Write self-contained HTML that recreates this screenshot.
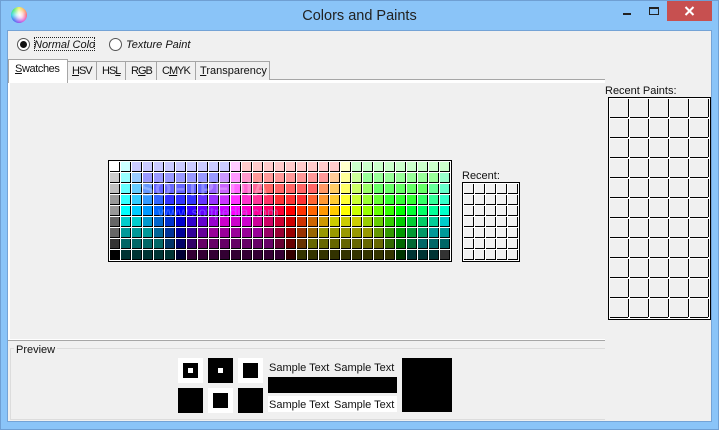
<!DOCTYPE html>
<html><head><meta charset="utf-8"><title>Colors and Paints</title>
<style>
html,body{margin:0;padding:0}
body{width:719px;height:430px;overflow:hidden;position:relative;background:#8ac4f8;font:11px "Liberation Sans",sans-serif;color:#111}
div,span{position:absolute;box-sizing:border-box}
u{text-decoration:underline}
.t{white-space:nowrap;line-height:14px}
.frame{left:0;top:0;width:719px;height:430px;border:1px solid #6f9fd3}
.client{left:7px;top:30px;width:705px;height:392px;background:#f0f0f0;border:1px solid #74a3d6}
.tab{top:61px;height:19px;background:#f0f0f0;border:1px solid #a6a6a6;border-bottom:0}
.g{border:1px solid #000;background:#fff;display:grid;padding:1px;gap:1px}
.g i{display:block;box-sizing:border-box;border-right:1px solid #000;border-bottom:1px solid #000;background:#f0f0f0}
#sw{left:108px;top:160px;width:344px;height:102px;grid-template-columns:repeat(31,10px);grid-auto-rows:10px}
#re{left:462px;top:182px;width:58px;height:80px;grid-template-columns:repeat(5,10px);grid-auto-rows:10px}
#rp{left:608px;top:97px;width:103px;height:223px;grid-template-columns:repeat(5,19px);grid-auto-rows:19px}
#rp i{position:relative}
#rp i::after{content:"";position:absolute;right:-1px;bottom:-1px;width:1px;height:1px;background:#f0f0f0}
.k{background:#000}.w{background:#fff}
</style></head><body>
<div class="frame"></div>
<div class="client"></div>

<div style="left:11px;top:7px;width:16px;height:16px;border-radius:50%;background:radial-gradient(circle at 55% 50%,rgba(255,255,255,1) 0,rgba(255,255,255,.8) 25%,rgba(255,255,255,.1) 70%,rgba(255,255,255,0) 80%),conic-gradient(#e8f040,#ff9030,#f83050,#e030c0,#8030e8,#3060f0,#20d0e0,#40e860,#e8f040)"></div>
<div class="t" style="left:0;top:7px;width:719px;text-align:center;font-size:14.5px;line-height:18px;color:#222">Colors and Paints</div>

<div style="left:623px;top:13px;width:8px;height:2px;background:#222"></div>
<div style="left:649px;top:7px;width:10px;height:8px;border:1px solid #222;border-top:2px solid #222"></div>
<div style="left:667px;top:1px;width:45px;height:20px;background:#c75050"></div>
<svg style="position:absolute;left:684px;top:6px" width="11" height="10" viewBox="0 0 11 10"><path d="M1.5 1L9.5 9M9.5 1L1.5 9" stroke="#fff" stroke-width="2"/></svg>

<div style="left:17px;top:38px;width:13px;height:13px;border-radius:50%;border:1px solid #555;background:#fff"></div>
<div style="left:20px;top:41px;width:7px;height:7px;border-radius:50%;background:#111"></div>
<div style="left:34px;top:37px;width:61px;height:14px;border:1px dotted #222"></div>
<div class="t" style="left:34px;top:38px;width:61px;overflow:hidden;font-style:italic">Normal Color</div>
<div style="left:109px;top:38px;width:13px;height:13px;border-radius:50%;border:1px solid #555;background:#fff"></div>
<div class="t" style="left:126px;top:38px;font-style:italic">Texture Paint</div>

<div style="left:8px;top:79px;width:597px;height:262px;background:#fff;border-top:1px solid #a6a6a6;border-bottom:1px solid #a6a6a6"></div>
<div style="left:10px;top:83px;width:595px;height:256px;background:#f0f0f0"></div>

<div class="tab" style="left:67px;width:30px"></div>
<div class="tab" style="left:96px;width:30px"></div>
<div class="tab" style="left:125px;width:32px"></div>
<div class="tab" style="left:156px;width:40px"></div>
<div class="tab" style="left:195px;width:75px"></div>
<div style="left:8px;top:59px;width:60px;height:24px;background:#fff;border:1px solid #a6a6a6;border-bottom:0"></div>
<div style="left:10px;top:83px;width:56px;height:1px;background:#f0f0f0"></div>
<div class="t" style="left:15px;top:62px;letter-spacing:-.4px"><u>S</u>watches</div>
<div class="t" style="left:72px;top:64px;letter-spacing:-1px"><u>H</u>SV</div>
<div class="t" style="left:102px;top:64px;letter-spacing:-1px">HS<u>L</u></div>
<div class="t" style="left:131px;top:64px;letter-spacing:-1px">R<u>G</u>B</div>
<div class="t" style="left:162px;top:64px;letter-spacing:-1px">C<u>M</u>YK</div>
<div class="t" style="left:200px;top:64px"><u>T</u>ransparency</div>

<div class="g" id="sw">
<i style="background:#fff"></i><i style="background:#cff"></i><i style="background:#ccf"></i><i style="background:#ccf"></i><i style="background:#ccf"></i><i style="background:#ccf"></i><i style="background:#ccf"></i><i style="background:#ccf"></i><i style="background:#ccf"></i><i style="background:#ccf"></i><i style="background:#ccf"></i><i style="background:#fcf"></i><i style="background:#fcc"></i><i style="background:#fcc"></i><i style="background:#fcc"></i><i style="background:#fcc"></i><i style="background:#fcc"></i><i style="background:#fcc"></i><i style="background:#fcc"></i><i style="background:#fcc"></i><i style="background:#fcc"></i><i style="background:#ffc"></i><i style="background:#cfc"></i><i style="background:#cfc"></i><i style="background:#cfc"></i><i style="background:#cfc"></i><i style="background:#cfc"></i><i style="background:#cfc"></i><i style="background:#cfc"></i><i style="background:#cfc"></i><i style="background:#cfc"></i>
<i style="background:#ccc"></i><i style="background:#9ff"></i><i style="background:#9cf"></i><i style="background:#99f"></i><i style="background:#99f"></i><i style="background:#99f"></i><i style="background:#99f"></i><i style="background:#99f"></i><i style="background:#99f"></i><i style="background:#99f"></i><i style="background:#c9f"></i><i style="background:#f9f"></i><i style="background:#f9c"></i><i style="background:#f99"></i><i style="background:#f99"></i><i style="background:#f99"></i><i style="background:#f99"></i><i style="background:#f99"></i><i style="background:#f99"></i><i style="background:#f99"></i><i style="background:#fc9"></i><i style="background:#ff9"></i><i style="background:#cf9"></i><i style="background:#9f9"></i><i style="background:#9f9"></i><i style="background:#9f9"></i><i style="background:#9f9"></i><i style="background:#9f9"></i><i style="background:#9f9"></i><i style="background:#9f9"></i><i style="background:#9fc"></i>
<i style="background:#c0c0c0"></i><i style="background:#6ff"></i><i style="background:#6cf"></i><i style="background:#69f"></i><i style="background:#66f"></i><i style="background:#66f"></i><i style="background:#66f"></i><i style="background:#66f"></i><i style="background:#66f"></i><i style="background:#96f"></i><i style="background:#c6f"></i><i style="background:#f6f"></i><i style="background:#f6c"></i><i style="background:#f69"></i><i style="background:#f66"></i><i style="background:#f66"></i><i style="background:#f66"></i><i style="background:#f66"></i><i style="background:#f66"></i><i style="background:#f96"></i><i style="background:#fc6"></i><i style="background:#ff6"></i><i style="background:#cf6"></i><i style="background:#9f6"></i><i style="background:#6f6"></i><i style="background:#6f6"></i><i style="background:#6f6"></i><i style="background:#6f6"></i><i style="background:#6f6"></i><i style="background:#6f9"></i><i style="background:#6fc"></i>
<i style="background:#999"></i><i style="background:#3ff"></i><i style="background:#3cf"></i><i style="background:#39f"></i><i style="background:#36f"></i><i style="background:#33f"></i><i style="background:#33f"></i><i style="background:#33f"></i><i style="background:#63f"></i><i style="background:#93f"></i><i style="background:#c3f"></i><i style="background:#f3f"></i><i style="background:#f3c"></i><i style="background:#f39"></i><i style="background:#f36"></i><i style="background:#f33"></i><i style="background:#f33"></i><i style="background:#f33"></i><i style="background:#f63"></i><i style="background:#f93"></i><i style="background:#fc3"></i><i style="background:#ff3"></i><i style="background:#cf3"></i><i style="background:#9f3"></i><i style="background:#6f3"></i><i style="background:#3f3"></i><i style="background:#3f3"></i><i style="background:#3f3"></i><i style="background:#3f6"></i><i style="background:#3f9"></i><i style="background:#3fc"></i>
<i style="background:#999"></i><i style="background:#0ff"></i><i style="background:#0cf"></i><i style="background:#09f"></i><i style="background:#06f"></i><i style="background:#03f"></i><i style="background:#00f"></i><i style="background:#30f"></i><i style="background:#60f"></i><i style="background:#90f"></i><i style="background:#c0f"></i><i style="background:#f0f"></i><i style="background:#f0c"></i><i style="background:#f09"></i><i style="background:#f06"></i><i style="background:#f03"></i><i style="background:#f00"></i><i style="background:#f30"></i><i style="background:#f60"></i><i style="background:#f90"></i><i style="background:#fc0"></i><i style="background:#ff0"></i><i style="background:#cf0"></i><i style="background:#9f0"></i><i style="background:#6f0"></i><i style="background:#3f0"></i><i style="background:#0f0"></i><i style="background:#0f3"></i><i style="background:#0f6"></i><i style="background:#0f9"></i><i style="background:#0fc"></i>
<i style="background:#666"></i><i style="background:#0cc"></i><i style="background:#0cc"></i><i style="background:#09c"></i><i style="background:#06c"></i><i style="background:#03c"></i><i style="background:#00c"></i><i style="background:#30c"></i><i style="background:#60c"></i><i style="background:#90c"></i><i style="background:#c0c"></i><i style="background:#c0c"></i><i style="background:#c0c"></i><i style="background:#c09"></i><i style="background:#c06"></i><i style="background:#c03"></i><i style="background:#c00"></i><i style="background:#c30"></i><i style="background:#c60"></i><i style="background:#c90"></i><i style="background:#cc0"></i><i style="background:#cc0"></i><i style="background:#cc0"></i><i style="background:#9c0"></i><i style="background:#6c0"></i><i style="background:#3c0"></i><i style="background:#0c0"></i><i style="background:#0c3"></i><i style="background:#0c6"></i><i style="background:#0c9"></i><i style="background:#0cc"></i>
<i style="background:#666"></i><i style="background:#099"></i><i style="background:#099"></i><i style="background:#099"></i><i style="background:#069"></i><i style="background:#039"></i><i style="background:#009"></i><i style="background:#309"></i><i style="background:#609"></i><i style="background:#909"></i><i style="background:#909"></i><i style="background:#909"></i><i style="background:#909"></i><i style="background:#909"></i><i style="background:#906"></i><i style="background:#903"></i><i style="background:#900"></i><i style="background:#930"></i><i style="background:#960"></i><i style="background:#990"></i><i style="background:#990"></i><i style="background:#990"></i><i style="background:#990"></i><i style="background:#990"></i><i style="background:#690"></i><i style="background:#390"></i><i style="background:#090"></i><i style="background:#093"></i><i style="background:#096"></i><i style="background:#099"></i><i style="background:#099"></i>
<i style="background:#333"></i><i style="background:#066"></i><i style="background:#066"></i><i style="background:#066"></i><i style="background:#066"></i><i style="background:#036"></i><i style="background:#006"></i><i style="background:#306"></i><i style="background:#606"></i><i style="background:#606"></i><i style="background:#606"></i><i style="background:#606"></i><i style="background:#606"></i><i style="background:#606"></i><i style="background:#606"></i><i style="background:#603"></i><i style="background:#600"></i><i style="background:#630"></i><i style="background:#660"></i><i style="background:#660"></i><i style="background:#660"></i><i style="background:#660"></i><i style="background:#660"></i><i style="background:#660"></i><i style="background:#660"></i><i style="background:#360"></i><i style="background:#060"></i><i style="background:#063"></i><i style="background:#066"></i><i style="background:#066"></i><i style="background:#066"></i>
<i style="background:#000"></i><i style="background:#033"></i><i style="background:#033"></i><i style="background:#033"></i><i style="background:#033"></i><i style="background:#033"></i><i style="background:#003"></i><i style="background:#303"></i><i style="background:#303"></i><i style="background:#303"></i><i style="background:#303"></i><i style="background:#303"></i><i style="background:#303"></i><i style="background:#303"></i><i style="background:#303"></i><i style="background:#303"></i><i style="background:#300"></i><i style="background:#330"></i><i style="background:#330"></i><i style="background:#330"></i><i style="background:#330"></i><i style="background:#330"></i><i style="background:#330"></i><i style="background:#330"></i><i style="background:#330"></i><i style="background:#330"></i><i style="background:#030"></i><i style="background:#033"></i><i style="background:#033"></i><i style="background:#033"></i><i style="background:#333"></i>
</div>
<div class="t" style="left:140px;top:178px;font-size:21px;line-height:24px;font-weight:bold;letter-spacing:1px;color:rgba(255,255,255,.25)">SOFTPEDIA</div>
<div class="t" style="left:158px;top:204px;font-size:14px;line-height:16px;color:rgba(150,170,255,.4)">www.softpedia.com</div>

<div class="t" style="left:462px;top:169px">Recent:</div>
<div class="g" id="re"><i></i><i></i><i></i><i></i><i></i><i></i><i></i><i></i><i></i><i></i><i></i><i></i><i></i><i></i><i></i><i></i><i></i><i></i><i></i><i></i><i></i><i></i><i></i><i></i><i></i><i></i><i></i><i></i><i></i><i></i><i></i><i></i><i></i><i></i><i></i></div>

<div class="t" style="left:605px;top:84px">Recent Paints:</div>
<div class="g" id="rp"><i></i><i></i><i></i><i></i><i></i><i></i><i></i><i></i><i></i><i></i><i></i><i></i><i></i><i></i><i></i><i></i><i></i><i></i><i></i><i></i><i></i><i></i><i></i><i></i><i></i><i></i><i></i><i></i><i></i><i></i><i></i><i></i><i></i><i></i><i></i><i></i><i></i><i></i><i></i><i></i><i></i><i></i><i></i><i></i><i></i><i></i><i></i><i></i><i></i><i></i><i></i><i></i><i></i><i></i><i></i></div>

<div style="left:10px;top:348px;width:595px;height:72px;border:1px solid #dcdcdc;border-right:0"></div>
<div class="t" style="left:14px;top:343px;padding:0 2px;background:#f0f0f0">Preview</div>

<div class="w" style="left:178px;top:358px;width:25px;height:25px"></div>
<div class="k" style="left:183px;top:363px;width:15px;height:15px"></div>
<div class="w" style="left:188px;top:368px;width:5px;height:5px"></div>
<div class="k" style="left:208px;top:358px;width:25px;height:25px"></div>
<div class="w" style="left:218px;top:368px;width:5px;height:5px"></div>
<div class="w" style="left:238px;top:358px;width:25px;height:25px"></div>
<div class="k" style="left:243px;top:363px;width:15px;height:15px"></div>
<div class="k" style="left:178px;top:388px;width:25px;height:25px"></div>
<div class="w" style="left:208px;top:388px;width:25px;height:25px"></div>
<div class="k" style="left:213px;top:393px;width:15px;height:15px"></div>
<div class="k" style="left:238px;top:388px;width:25px;height:25px"></div>

<div class="t" style="left:269px;top:361px">Sample Text</div>
<div class="t" style="left:334px;top:361px">Sample Text</div>
<div class="k" style="left:268px;top:377px;width:129px;height:16px"></div>
<div class="w" style="left:268px;top:396px;width:129px;height:16px"></div>
<div class="t" style="left:269px;top:398px">Sample Text</div>
<div class="t" style="left:334px;top:398px">Sample Text</div>
<div class="k" style="left:402px;top:358px;width:50px;height:54px"></div>
</body></html>
